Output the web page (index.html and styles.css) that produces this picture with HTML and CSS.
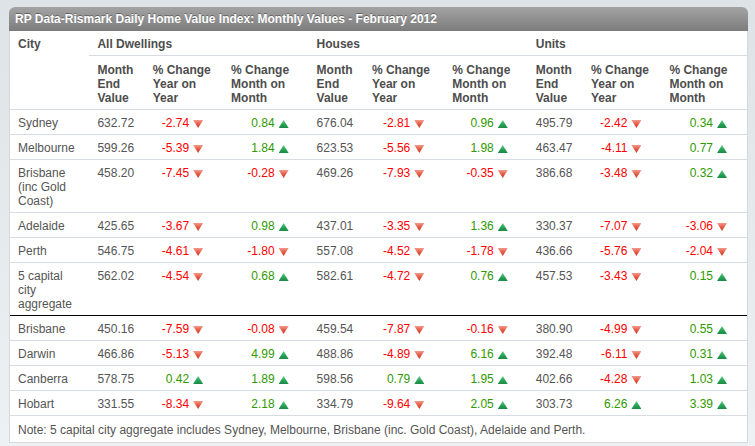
FILE: index.html
```html
<!DOCTYPE html>
<html>
<head>
<meta charset="utf-8">
<link rel="stylesheet" href="styles.css">
</head>
<body>
<div class="panel">
  <div class="title">RP Data-Rismark Daily Home Value Index: Monthly Values - February 2012</div>
  <table class="grid">
    <colgroup>
      <col class="c-city"><col class="c-val"><col class="c-yoy"><col class="c-mom">
      <col class="c-val"><col class="c-yoy2"><col class="c-mom2">
      <col class="c-val"><col class="c-yoy"><col class="c-mom3">
    </colgroup>
    <thead>
      <tr class="grp">
        <th rowspan="2" class="city-h">City</th>
        <th colspan="3">All Dwellings</th>
        <th colspan="3">Houses</th>
        <th colspan="3">Units</th>
      </tr>
      <tr class="sub">
        <th>Month End Value</th><th>% Change Year on Year</th><th>% Change Month on Month</th>
        <th>Month End Value</th><th>% Change Year on Year</th><th>% Change Month on Month</th>
        <th>Month End Value</th><th>% Change Year on Year</th><th>% Change Month on Month</th>
      </tr>
    </thead>
    <tbody>
      <tr><td>Sydney</td><td>632.72</td><td class="p"><span class="neg">-2.74</span><i class="dn"></i></td><td class="p"><span class="pos">0.84</span><i class="up"></i></td><td>676.04</td><td class="p"><span class="neg">-2.81</span><i class="dn"></i></td><td class="p"><span class="pos">0.96</span><i class="up"></i></td><td>495.79</td><td class="p"><span class="neg">-2.42</span><i class="dn"></i></td><td class="p"><span class="pos">0.34</span><i class="up"></i></td></tr>
      <tr><td>Melbourne</td><td>599.26</td><td class="p"><span class="neg">-5.39</span><i class="dn"></i></td><td class="p"><span class="pos">1.84</span><i class="up"></i></td><td>623.53</td><td class="p"><span class="neg">-5.56</span><i class="dn"></i></td><td class="p"><span class="pos">1.98</span><i class="up"></i></td><td>463.47</td><td class="p"><span class="neg">-4.11</span><i class="dn"></i></td><td class="p"><span class="pos">0.77</span><i class="up"></i></td></tr>
      <tr><td>Brisbane (inc Gold Coast)</td><td>458.20</td><td class="p"><span class="neg">-7.45</span><i class="dn"></i></td><td class="p"><span class="neg">-0.28</span><i class="dn"></i></td><td>469.26</td><td class="p"><span class="neg">-7.93</span><i class="dn"></i></td><td class="p"><span class="neg">-0.35</span><i class="dn"></i></td><td>386.68</td><td class="p"><span class="neg">-3.48</span><i class="dn"></i></td><td class="p"><span class="pos">0.32</span><i class="up"></i></td></tr>
      <tr><td>Adelaide</td><td>425.65</td><td class="p"><span class="neg">-3.67</span><i class="dn"></i></td><td class="p"><span class="pos">0.98</span><i class="up"></i></td><td>437.01</td><td class="p"><span class="neg">-3.35</span><i class="dn"></i></td><td class="p"><span class="pos">1.36</span><i class="up"></i></td><td>330.37</td><td class="p"><span class="neg">-7.07</span><i class="dn"></i></td><td class="p"><span class="neg">-3.06</span><i class="dn"></i></td></tr>
      <tr><td>Perth</td><td>546.75</td><td class="p"><span class="neg">-4.61</span><i class="dn"></i></td><td class="p"><span class="neg">-1.80</span><i class="dn"></i></td><td>557.08</td><td class="p"><span class="neg">-4.52</span><i class="dn"></i></td><td class="p"><span class="neg">-1.78</span><i class="dn"></i></td><td>436.66</td><td class="p"><span class="neg">-5.76</span><i class="dn"></i></td><td class="p"><span class="neg">-2.04</span><i class="dn"></i></td></tr>
      <tr class="agg"><td>5 capital city aggregate</td><td>562.02</td><td class="p"><span class="neg">-4.54</span><i class="dn"></i></td><td class="p"><span class="pos">0.68</span><i class="up"></i></td><td>582.61</td><td class="p"><span class="neg">-4.72</span><i class="dn"></i></td><td class="p"><span class="pos">0.76</span><i class="up"></i></td><td>457.53</td><td class="p"><span class="neg">-3.43</span><i class="dn"></i></td><td class="p"><span class="pos">0.15</span><i class="up"></i></td></tr>
      <tr><td>Brisbane</td><td>450.16</td><td class="p"><span class="neg">-7.59</span><i class="dn"></i></td><td class="p"><span class="neg">-0.08</span><i class="dn"></i></td><td>459.54</td><td class="p"><span class="neg">-7.87</span><i class="dn"></i></td><td class="p"><span class="neg">-0.16</span><i class="dn"></i></td><td>380.90</td><td class="p"><span class="neg">-4.99</span><i class="dn"></i></td><td class="p"><span class="pos">0.55</span><i class="up"></i></td></tr>
      <tr><td>Darwin</td><td>466.86</td><td class="p"><span class="neg">-5.13</span><i class="dn"></i></td><td class="p"><span class="pos">4.99</span><i class="up"></i></td><td>488.86</td><td class="p"><span class="neg">-4.89</span><i class="dn"></i></td><td class="p"><span class="pos">6.16</span><i class="up"></i></td><td>392.48</td><td class="p"><span class="neg">-6.11</span><i class="dn"></i></td><td class="p"><span class="pos">0.31</span><i class="up"></i></td></tr>
      <tr><td>Canberra</td><td>578.75</td><td class="p"><span class="pos">0.42</span><i class="up"></i></td><td class="p"><span class="pos">1.89</span><i class="up"></i></td><td>598.56</td><td class="p"><span class="pos">0.79</span><i class="up"></i></td><td class="p"><span class="pos">1.95</span><i class="up"></i></td><td>402.66</td><td class="p"><span class="neg">-4.28</span><i class="dn"></i></td><td class="p"><span class="pos">1.03</span><i class="up"></i></td></tr>
      <tr><td>Hobart</td><td>331.55</td><td class="p"><span class="neg">-8.34</span><i class="dn"></i></td><td class="p"><span class="pos">2.18</span><i class="up"></i></td><td>334.79</td><td class="p"><span class="neg">-9.64</span><i class="dn"></i></td><td class="p"><span class="pos">2.05</span><i class="up"></i></td><td>303.73</td><td class="p"><span class="pos">6.26</span><i class="up"></i></td><td class="p"><span class="pos">3.39</span><i class="up"></i></td></tr>
      <tr class="note"><td colspan="10">Note: 5 capital city aggregate includes Sydney, Melbourne, Brisbane (inc. Gold Coast), Adelaide and Perth.</td></tr>
    </tbody>
  </table>
</div>
</body>
</html>
```
FILE: styles.css
```css
html, body {
  margin: 0;
  padding: 0;
}
body {
  width: 755px;
  height: 446px;
  overflow: hidden;
  background: linear-gradient(180deg, #dde3e6 0%, #e6ebee 60%, #eef1f3 100%);
  font-family: "Liberation Sans", Arial, Helvetica, sans-serif;
  font-size: 12px;
  color: #555;
}
.panel {
  margin: 7px 0 0 9px;
  width: 739px;
  box-sizing: border-box;
  background: #fff;
  border-left: 1px solid #d3d9dd;
  border-right: 1px solid #d3d9dd;
  border-bottom: 1px solid #d3d9dd;
  border-radius: 6px 6px 0 0;
}
.title {
  height: 24px;
  line-height: 24px;
  margin: 0 -1px;
  padding-left: 6px;
  background: linear-gradient(180deg, #a3a3a3 0%, #909090 50%, #7c7c7c 100%);
  border-radius: 6px 6px 0 0;
  color: #fff;
  font-weight: bold;
  font-size: 12px;
  text-shadow: 0 -1px 0 rgba(0,0,0,0.35);
  white-space: nowrap;
}
.grid {
  width: 737px;
  border-collapse: collapse;
  table-layout: fixed;
}
.c-city { width: 79px; }
.c-val { width: 55px; }
.c-yoy { width: 78px; }
.c-mom { width: 85px; }
.c-yoy2 { width: 80px; }
.c-mom2 { width: 83px; }
.c-mom3 { width: 85px; }
.grid th, .grid td {
  padding: 6px 8px 4px 8px;
  line-height: 14px;
  vertical-align: top;
  text-align: left;
  border-bottom: 1px solid #d6dce1;
}
.grid th {
  font-weight: bold;
  color: #4d4d4d;
}
.grid tr.sub th {
  padding-top: 7px;
}
.grid td {
  font-weight: normal;
}
.grid td.p {
  text-align: right;
  padding-right: 20px;
  white-space: nowrap;
}
.grid tr.agg td {
  border-bottom: 1px solid #000;
}
.neg { color: #f00; }
.pos { color: #2f9a00; }
.dn, .up {
  display: inline-block;
  width: 10px;
  height: 8px;
  margin-left: 4px;
  vertical-align: -1px;
}
.dn {
  clip-path: polygon(0 0, 100% 0, 50% 100%);
  background: linear-gradient(180deg, #f39a8c 0%, #e2553f 55%, #d13a26 100%);
}
.up {
  clip-path: polygon(50% 0, 100% 100%, 0 100%);
  background: linear-gradient(180deg, #5ccf86 0%, #29a357 55%, #188a44 100%);
}
.grid tr.note td {
  border-bottom: none;
  padding-top: 7px;
  padding-bottom: 5px;
}
```
